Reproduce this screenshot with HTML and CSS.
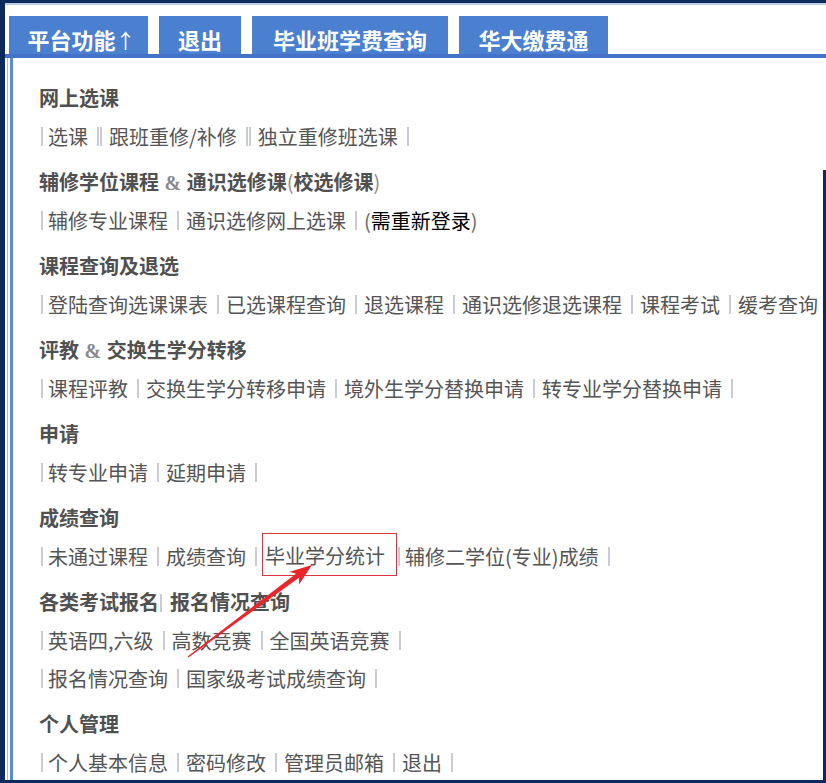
FILE: index.html
```html
<!DOCTYPE html>
<html lang="zh-CN">
<head>
    <meta charset="UTF-8">
    <meta name="viewport" content="width=device-width, initial-scale=1.0">
    <title>平台功能</title>
    <link rel="stylesheet" href="styles.css">
</head>
<body>
<div class="frame">
    <div class="topline"></div>

    <div class="tabs">
        <div class="tab t1">平台功能<span class="arr">↑</span></div>
        <div class="tab t2">退出</div>
        <div class="tab t3">毕业班学费查询</div>
        <div class="tab t4">华大缴费通</div>
    </div>
    <div class="tabbar"></div>

    <div class="main">
        <div class="panel">

            <div class="sec">
                <h3>网上选课</h3>
                <div class="row">
                    <span class="sep"></span><a>选课</a>
                    <span class="sep dbl"></span><a>跟班重修/补修</a>
                    <span class="sep dbl"></span><a>独立重修班选课</a>
                    <span class="sep"></span>
                </div>
            </div>

            <div class="sec">
                <h3>辅修学位课程 <span class="amp">&amp;</span> 通识选修课<span class="par">(</span>校选修课<span class="par">)</span></h3>
                <div class="row">
                    <span class="sep"></span><a>辅修专业课程</a>
                    <span class="sep"></span><a>通识选修网上选课</a>
                    <span class="sep"></span><span class="note"><b>(</b>需重新登录<b>)</b></span>
                </div>
            </div>

            <div class="sec">
                <h3>课程查询及退选</h3>
                <div class="row">
                    <span class="sep"></span><a>登陆查询选课课表</a>
                    <span class="sep"></span><a>已选课程查询</a>
                    <span class="sep"></span><a>退选课程</a>
                    <span class="sep"></span><a>通识选修退选课程</a>
                    <span class="sep"></span><a>课程考试</a>
                    <span class="sep"></span><a>缓考查询</a>
                </div>
            </div>

            <div class="sec">
                <h3>评教 <span class="amp">&amp;</span> 交换生学分转移</h3>
                <div class="row">
                    <span class="sep"></span><a>课程评教</a>
                    <span class="sep"></span><a>交换生学分转移申请</a>
                    <span class="sep"></span><a>境外生学分替换申请</a>
                    <span class="sep"></span><a>转专业学分替换申请</a>
                    <span class="sep"></span>
                </div>
            </div>

            <div class="sec">
                <h3>申请</h3>
                <div class="row">
                    <span class="sep"></span><a>转专业申请</a>
                    <span class="sep"></span><a>延期申请</a>
                    <span class="sep"></span>
                </div>
            </div>

            <div class="sec">
                <h3>成绩查询</h3>
                <div class="row">
                    <span class="sep"></span><a>未通过课程</a>
                    <span class="sep"></span><a>成绩查询</a>
                    <span class="sep"></span><a class="mark">毕业学分统计</a>
                    <span class="sep after-mark"></span><a>辅修二学位(专业)成绩</a>
                    <span class="sep"></span>
                </div>
            </div>

            <div class="sec">
                <h3>各类考试报名<span class="hsep"></span>报名情况查询</h3>
                <div class="row">
                    <span class="sep"></span><a>英语四,六级</a>
                    <span class="sep"></span><a>高数竞赛</a>
                    <span class="sep"></span><a>全国英语竞赛</a>
                    <span class="sep"></span>
                </div>
                <div class="row">
                    <span class="sep"></span><a>报名情况查询</a>
                    <span class="sep"></span><a>国家级考试成绩查询</a>
                    <span class="sep"></span>
                </div>
            </div>

            <div class="sec">
                <h3>个人管理</h3>
                <div class="row">
                    <span class="sep"></span><a>个人基本信息</a>
                    <span class="sep"></span><a>密码修改</a>
                    <span class="sep"></span><a>管理员邮箱</a>
                    <span class="sep"></span><a>退出</a>
                    <span class="sep"></span>
                </div>
            </div>

        </div>
    </div>

    <!-- red annotation arrow -->
    <svg class="arrow" width="826" height="783" viewBox="0 0 826 783">
        <polygon fill="#e8262b" points="187.6,656.5 296.0,573.7 289.5,571.7 312,565 299.1,584.5 299.0,577.7 188.4,657.5"/>
    </svg>
</div>
</body>
</html>
```

FILE: styles.css
```css
html {
    background: #0c2a5e;
}
body {
    margin: 0;
    font-family: "Noto Sans CJK SC", "Noto Sans", sans-serif;
}
.frame {
    position: relative;
    height: 783px;
    box-sizing: border-box;
    border: solid #0c2a5e;
    border-width: 3px 0 3px 5px; /* dark window edge */
    background: #fff;
    overflow: hidden;
}
.frame::after {
    content: "";
    position: absolute;
    right: 0;
    top: 167px;
    bottom: 0;
    width: 3px;
    background: #0c2a5e;
}
.topline {
    height: 2px;
    background: #bccde4;
}

/* tabs */
.tabs {
    display: flex;
    gap: 11px;
    padding: 11px 0 0 4px;
}
.tab {
    height: 34px;
    padding-top: 4px;
    line-height: 38px;
    background: #4b7fd0;
    color: #fff;
    font-size: 22px;
    font-weight: bold;
    text-align: center;
}
.tab .arr {
    font-weight: normal;
    font-size: 20px;
}
.t1 { width: 139px; padding-left: 6px; box-sizing: border-box; height: 38px; }
.t2 { width: 82px; }
.t3 { width: 196px; }
.t4 { width: 149px; }
.tabbar {
    height: 4px;
    background: #4472c9;
}

/* content */
.main {
    margin-left: 2px;
    border-left: 1px solid #b9b9b9;
    padding-left: 2px;
    height: 722px;
}
.panel {
    height: 100%;
    box-sizing: border-box;
    border-left: 3px solid #5b8bd8;
    padding: 21px 0 0 26px;
    white-space: nowrap;
}
.sec {
    margin-bottom: 8px;
}
h3 {
    margin: 0;
    height: 38px;
    line-height: 38px;
    font-size: 20px;
    font-weight: bold;
    color: #505050;
}
.amp {
    font-family: "Liberation Serif", serif;
    color: #8a8a8a;
    margin: 0 1px;
}
.par {
    color: #8a8a8a;
    font-weight: normal;
}
.hsep {
    display: inline-block;
    width: 2px;
    height: 18px;
    background: #c9ccd4;
    margin: 0 8px 0 1px;
    vertical-align: -2px;
}
.row {
    display: flex;
    align-items: center;
    height: 38px;
    font-size: 20px;
    color: #555;
}
.row a {
    color: #555;
}
.sep {
    width: 2px;
    height: 19px;
    background: #c9ccd4;
    margin: 0 7px 0 9px;
    flex: none;
}
.sep:first-child {
    margin-left: 2px;
    margin-right: 5px;
}
.sep.dbl {
    width: 1px;
    background: none;
    border-left: 2px solid #c9ccd4;
    border-right: 2px solid #c9ccd4;
}
.note {
    color: #000;
}
.note b {
    font-weight: normal;
    color: #666;
}
.mark {
    position: relative;
    margin-left: -2px;
    padding: 0 12px 0 3px;
    line-height: 38px;
}
.mark::after {
    content: "";
    position: absolute;
    left: 0;
    right: 0;
    top: -4px;
    bottom: -1px;
    border: 1px solid #d9363e;
}
.sep.after-mark {
    margin-left: 1px;
    margin-right: 5px;
}
.arrow {
    position: absolute;
    left: -5px;
    top: -3px;
    pointer-events: none;
}
```
